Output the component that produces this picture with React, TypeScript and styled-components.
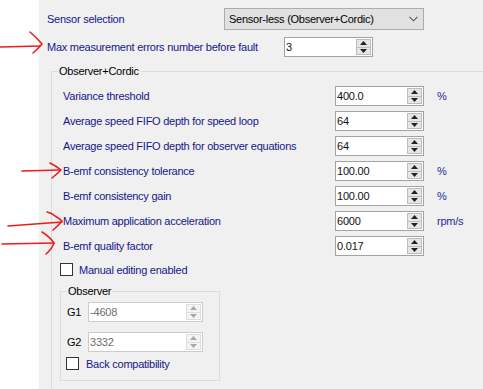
import * as React from 'react';
import styled, { createGlobalStyle } from 'styled-components';

const GlobalStyle = createGlobalStyle`
  html, body {
    margin: 0;
    padding: 0;
    background: #f0f0f0;
    overflow: hidden;
  }
  body {
    font-family: "Liberation Sans", Arial, sans-serif;
    font-size: 11px;
  }
`;

const Screen = styled.div`
  position: relative;
  display: flex;
  width: 483px;
  height: 389px;
  overflow: hidden;
`;

const Gutter = styled.div`
  width: 39px;
  flex-shrink: 0;
  background: #ffffff;
`;

const Panel = styled.div`
  flex: 1;
  padding: 8px 0 0 8px;
  background: #f0f0f0;
`;

const Row = styled.div<{ $mt?: number; $h?: number; $ml?: number }>`
  display: flex;
  align-items: center;
  height: ${(p) => p.$h ?? 20}px;
  margin-top: ${(p) => p.$mt ?? 0}px;
  margin-left: ${(p) => p.$ml ?? 0}px;
`;

const Label = styled.span<{ $w?: number; $dark?: boolean }>`
  ${(p) => (p.$w ? `width: ${p.$w}px; flex-shrink: 0;` : '')}
  color: ${(p) => (p.$dark ? '#000000' : '#16168a')};
  letter-spacing: -0.25px;
  white-space: nowrap;
`;

const Unit = styled.span`
  margin-left: 13px;
  color: #2a2a9a;
  letter-spacing: -0.25px;
`;

const Combo = styled.div`
  display: flex;
  align-items: center;
  justify-content: space-between;
  box-sizing: border-box;
  width: 200px;
  height: 22px;
  padding: 0 5px 0 4px;
  background: #e1e1e1;
  border: 1px solid #adadad;
  color: #000;
  letter-spacing: -0.25px;
`;

const Group = styled.fieldset<{ $w: number; $h: number; $ml: number; $mt: number }>`
  box-sizing: border-box;
  width: ${(p) => p.$w}px;
  height: ${(p) => p.$h}px;
  margin: ${(p) => p.$mt}px 0 0 ${(p) => p.$ml}px;
  padding: 0;
  min-width: 0;
  border: 1px solid #dcdcdc;
`;

const Legend = styled.legend`
  margin-left: 6px;
  padding: 0 1px;
  line-height: 14px;
  color: #000;
  letter-spacing: -0.25px;
`;

const GroupBody = styled.div<{ $pt: number; $pl: number }>`
  display: flex;
  flex-direction: column;
  padding: ${(p) => p.$pt}px 0 0 ${(p) => p.$pl}px;
`;

const ParamList = styled.div`
  display: flex;
  flex-direction: column;
  gap: 5px;
`;

const SpinBox = styled.div<{ $w: number; $off?: boolean }>`
  display: flex;
  box-sizing: border-box;
  width: ${(p) => p.$w}px;
  height: 20px;
  border: 1px solid ${(p) => (p.$off ? '#cccccc' : '#a3a3a3')};
  background: #ffffff;
`;

const SpinText = styled.span<{ $off?: boolean }>`
  flex: 1;
  padding-left: 1px;
  line-height: 18px;
  color: ${(p) => (p.$off ? '#6d6d6d' : '#111111')};
  letter-spacing: -0.2px;
`;

const Spinner = styled.div`
  display: flex;
  flex-direction: column;
  width: 15px;
  margin: 1px 1px 1px 0;
`;

const SpinBtn = styled.div<{ $off?: boolean }>`
  flex: 1;
  display: flex;
  align-items: center;
  justify-content: center;
  background: ${(p) => (p.$off ? '#f4f4f4' : '#e6e6e6')};
  border: 1px solid ${(p) => (p.$off ? '#dedede' : '#bdbdbd')};
  & + & {
    border-top: none;
  }
`;

const Check = styled.span`
  box-sizing: border-box;
  width: 13px;
  height: 13px;
  flex-shrink: 0;
  border: 1px solid #333333;
  background: #ffffff;
`;

const CheckRow = styled(Row)<{ $gap: number }>`
  height: 13px;
  gap: ${(p) => p.$gap}px;
`;

const Overlay = styled.svg`
  position: absolute;
  left: 0;
  top: 0;
  pointer-events: none;
`;

const Tri: React.FC<{ up?: boolean; off?: boolean }> = ({ up, off }) => (
  <svg width="7" height="4" viewBox="0 0 7 4">
    <polygon
      points={up ? '0,4 7,4 3.5,0' : '0,0 7,0 3.5,4'}
      fill={off ? '#a8a8a8' : '#222'}
    />
  </svg>
);

const Spin: React.FC<{ value: string; w?: number; off?: boolean }> = ({ value, w = 89, off }) => (
  <SpinBox $w={w} $off={off}>
    <SpinText $off={off}>{value}</SpinText>
    <Spinner>
      <SpinBtn $off={off}>
        <Tri up off={off} />
      </SpinBtn>
      <SpinBtn $off={off}>
        <Tri off={off} />
      </SpinBtn>
    </Spinner>
  </SpinBox>
);

const params: { label: string; value: string; unit?: string }[] = [
  { label: 'Variance threshold', value: '400.0', unit: '%' },
  { label: 'Average speed FIFO depth for speed loop', value: '64' },
  { label: 'Average speed FIFO depth for observer equations', value: '64' },
  { label: 'B-emf consistency tolerance', value: '100.00', unit: '%' },
  { label: 'B-emf consistency gain', value: '100.00', unit: '%' },
  { label: 'Maximum application acceleration', value: '6000', unit: 'rpm/s' },
  { label: 'B-emf quality factor', value: '0.017' },
];

const App: React.FC = () => {
  return (
    <Screen>
      <GlobalStyle />
      <Gutter />
      <Panel>
        <Row $h={22}>
          <Label $w={177}>Sensor selection</Label>
          <Combo>
            <span>Sensor-less (Observer+Cordic)</span>
            <svg width="9" height="6" viewBox="0 0 9 6">
              <polyline points="0.5,0.8 4.5,4.8 8.5,0.8" fill="none" stroke="#555" strokeWidth="1.1" />
            </svg>
          </Combo>
        </Row>
        <Row $mt={7}>
          <Label $w={237}>Max measurement errors number before fault</Label>
          <Spin value="3" />
        </Row>

        <Group $w={480} $h={400} $ml={4} $mt={7}>
          <Legend>Observer+Cordic</Legend>
          <GroupBody $pt={8} $pl={11}>
            <ParamList>
              {params.map((p) => (
                <Row key={p.label}>
                  <Label $w={272}>{p.label}</Label>
                  <Spin value={p.value} />
                  {p.unit && <Unit>{p.unit}</Unit>}
                </Row>
              ))}
            </ParamList>

            <CheckRow $mt={7} $ml={-3} $gap={6}>
              <Check />
              <Label>Manual editing enabled</Label>
            </CheckRow>

            <Group $w={160} $h={97} $ml={-3} $mt={8}>
              <Legend>Observer</Legend>
              <GroupBody $pt={4} $pl={5}>
                <Row $ml={1}>
                  <Label $w={21} $dark>G1</Label>
                  <Spin value="-4608" w={115} off />
                </Row>
                <Row $mt={10} $ml={1}>
                  <Label $w={21} $dark>G2</Label>
                  <Spin value="3332" w={115} off />
                </Row>
                <CheckRow $mt={5} $gap={7}>
                  <Check />
                  <Label>Back compatibility</Label>
                </CheckRow>
              </GroupBody>
            </Group>
          </GroupBody>
        </Group>
      </Panel>

      <Overlay width="80" height="389" viewBox="0 0 80 389">
        <g fill="none" stroke="#ee1c1c" strokeWidth="1.6" strokeLinecap="round" strokeLinejoin="round">
          <path d="M0 47 L40 46" />
          <path d="M30 32 Q36 37 42 44 Q38 49 33 53" />
          <path d="M22 171 L60 170" />
          <path d="M50 163 Q56 166 61 170 Q57 174 52 178" />
          <path d="M8 226 Q35 224 62 222" />
          <path d="M47 212 Q52 213 55 216 Q60 219 62 221 Q58 226 53 230" />
          <path d="M2 244 L54 243" />
          <path d="M42 232 Q50 237 54 243 Q52 249 46 254" />
        </g>
      </Overlay>
    </Screen>
  );
};

export default App;
